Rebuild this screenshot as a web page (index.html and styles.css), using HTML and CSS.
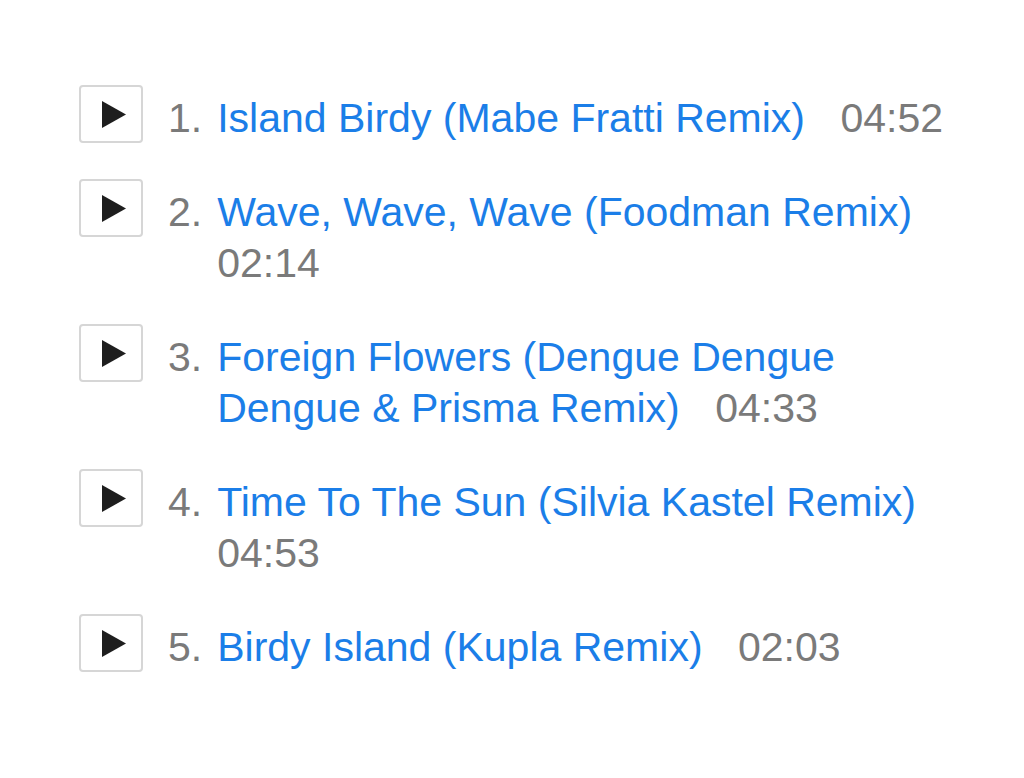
FILE: index.html
```html
<!DOCTYPE html>
<html>
<head>
<meta charset="utf-8">
<link rel="stylesheet" href="styles.css">
</head>
<body>
<table class="tracks">
  <tr class="track">
    <td class="play-cell"><button class="play"><svg width="24" height="27" viewBox="0 0 24 27"><polygon points="0,0 24,13.5 0,27" fill="#1e1e1e"/></svg></button></td>
    <td class="num">1.</td>
    <td class="info"><a class="title" href="#">Island Birdy (Mabe Fratti Remix)</a> <span class="time">04:52</span></td>
  </tr>
  <tr class="track">
    <td class="play-cell"><button class="play"><svg width="24" height="27" viewBox="0 0 24 27"><polygon points="0,0 24,13.5 0,27" fill="#1e1e1e"/></svg></button></td>
    <td class="num">2.</td>
    <td class="info"><a class="title" href="#">Wave, Wave, Wave (Foodman Remix)</a> <span class="time">02:14</span></td>
  </tr>
  <tr class="track">
    <td class="play-cell"><button class="play"><svg width="24" height="27" viewBox="0 0 24 27"><polygon points="0,0 24,13.5 0,27" fill="#1e1e1e"/></svg></button></td>
    <td class="num">3.</td>
    <td class="info"><a class="title" href="#">Foreign Flowers (Dengue Dengue Dengue &amp; Prisma Remix)</a> <span class="time">04:33</span></td>
  </tr>
  <tr class="track">
    <td class="play-cell"><button class="play"><svg width="24" height="27" viewBox="0 0 24 27"><polygon points="0,0 24,13.5 0,27" fill="#1e1e1e"/></svg></button></td>
    <td class="num">4.</td>
    <td class="info"><a class="title" href="#">Time To The Sun (Silvia Kastel Remix)</a> <span class="time">04:53</span></td>
  </tr>
  <tr class="track">
    <td class="play-cell"><button class="play"><svg width="24" height="27" viewBox="0 0 24 27"><polygon points="0,0 24,13.5 0,27" fill="#1e1e1e"/></svg></button></td>
    <td class="num">5.</td>
    <td class="info"><a class="title" href="#">Birdy Island (Kupla Remix)</a> <span class="time">02:03</span></td>
  </tr>
</table>
</body>
</html>
```
FILE: styles.css
```css
html, body {
  margin: 0;
  padding: 0;
  background: #ffffff;
}
body {
  font-family: "Liberation Sans", Arial, Helvetica, sans-serif;
  font-size: 41px;
  line-height: 51px;
  color: #7a7a7a;
}
.tracks {
  border-collapse: collapse;
  margin: 85px 0 0 79px;
  width: 885px;
}
.track td {
  vertical-align: top;
  padding: 0 0 35px 0;
}
.play-cell {
  width: 64px;
}
.play {
  display: flex;
  align-items: center;
  justify-content: flex-start;
  box-sizing: border-box;
  width: 64px;
  height: 58px;
  padding: 0 0 0 21px;
  margin: 0;
  background: #ffffff;
  border: 2px solid #d6d6d6;
  border-radius: 4px;
}
.play svg {
  display: block;
}
.track td.num {
  padding-top: 8px;
  padding-left: 25px;
  padding-right: 15px;
  width: 34px;
  white-space: nowrap;
  color: #7a7a7a;
}
.track td.info {
  padding-top: 8px;
}
.title {
  color: #1b7ee8;
  text-decoration: none;
  margin-right: 24px;
}
.time {
  color: #7a7a7a;
}
```
